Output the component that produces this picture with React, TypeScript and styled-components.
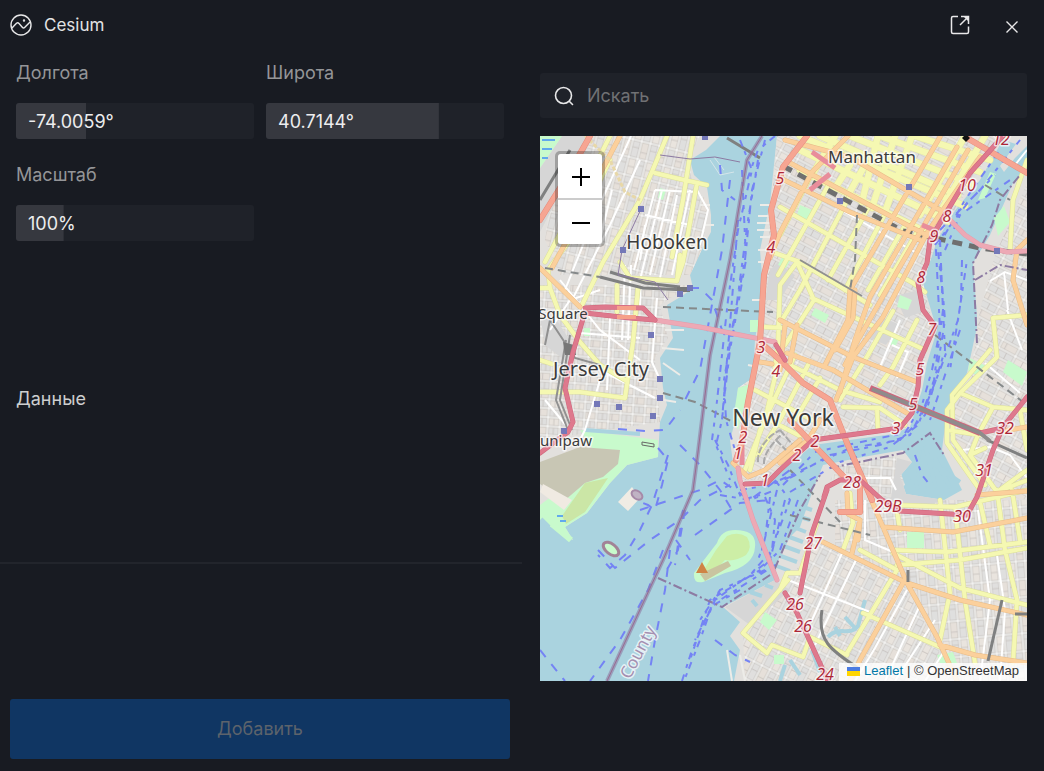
import React, { useId, useState } from "react";
import styled, { createGlobalStyle } from "styled-components";

const GlobalStyle = createGlobalStyle`
  *, *::before, *::after { box-sizing: border-box; }
  body {
    margin: 0;
    background: #181b22;
    color: #e3e3e4;
    font-family: Inter, "Liberation Sans", sans-serif;
    font-size: 18px;
    line-height: 24px;
  }
`;

const Page = styled.div`
  min-height: 100vh;
  display: flex;
  flex-direction: column;
`;

const Header = styled.header`
  display: flex;
  align-items: center;
  gap: 12px;
  height: 50px;
  padding: 0 16px 0 10px;
`;

const Title = styled.h1`
  flex: 1;
  margin: 0;
  font-size: 17px;
  font-weight: 400;
`;

const IconButton = styled.button`
  display: grid;
  place-items: center;
  width: 32px;
  height: 32px;
  padding: 0;
  border: 0;
  background: none;
  color: #e8e8e9;
`;

const HeaderActions = styled.div`
  display: flex;
  gap: 20px;
`;

const Columns = styled.main`
  flex: 1;
  display: grid;
  grid-template-columns: 1fr 1fr;
`;

const Settings = styled.section`
  display: flex;
  flex-direction: column;
`;

const Fields = styled.div`
  display: grid;
  grid-template-columns: 1fr 1fr;
  gap: 24px 12px;
  padding: 11px 18px 0 16px;
`;

const Field = styled.div`
  display: flex;
  flex-direction: column;
  gap: 18px;
`;

const Label = styled.label`
  color: #949598;
`;

const SliderBox = styled.div`
  position: relative;
  height: 36px;
`;

const Slider = styled.input`
  appearance: none;
  display: block;
  width: 100%;
  height: 36px;
  margin: 0;
  border-radius: 3px;
  background: linear-gradient(#36383f, #36383f) 0 0 / var(--fill) 100% no-repeat #1f2229;

  &::-webkit-slider-thumb {
    appearance: none;
    width: 1px;
    height: 36px;
  }
`;

const SliderValue = styled.output`
  position: absolute;
  top: 7px;
  left: 12px;
  color: #ededee;
  pointer-events: none;
`;

const DataSection = styled.section`
  height: 177px;
  margin-top: 146px;
  padding: 0 16px;
  border-bottom: 2px solid #22252c;
`;

const SectionTitle = styled.h2`
  margin: 0;
  color: #cdcecf;
  font-size: 18px;
  font-weight: 400;
`;

const AddButton = styled.button`
  height: 60px;
  margin: auto 12px 12px 10px;
  border: 0;
  border-radius: 3px;
  background: #103663;
  color: #5d636b;
  font: inherit;
`;

const MapColumn = styled.section`
  display: flex;
  flex-direction: column;
  gap: 18px;
  padding: 23px 17px 16px 18px;
`;

const SearchBox = styled.label`
  display: flex;
  align-items: center;
  gap: 13px;
  height: 45px;
  padding: 0 14px;
  border-radius: 3px;
  background: #1f2229;
  color: #e8e8e9;
`;

const SearchInput = styled.input`
  flex: 1;
  min-width: 0;
  padding: 0;
  border: 0;
  outline: 0;
  background: none;
  color: #e8e8e9;
  font: 18px/24px Inter, sans-serif;
  &::placeholder { color: #707174; }
`;

const MapFrame = styled.div`
  position: relative;
  height: 545px;
  overflow: hidden;
  background: #aad3df;
`;

const MapSvg = styled.svg`
  display: block;
  width: 100%;
  height: 100%;
`;

const ZoomControl = styled.div`
  position: absolute;
  top: 15px;
  left: 15px;
  width: 50px;
  padding: 3px;
  border-radius: 5px;
  background: rgba(0, 0, 0, 0.25);
`;

const ZoomButtons = styled.div`
  display: grid;
  gap: 2px;
  border-radius: 3px;
  overflow: hidden;
  background: #ccc;
`;

const ZoomButton = styled.button`
  display: grid;
  place-items: center;
  height: 44px;
  padding: 2px 0 0 2px;
  border: 0;
  background: #fff;
  color: #000;
`;

const Attribution = styled.div`
  position: absolute;
  right: 0;
  bottom: 0;
  display: flex;
  align-items: center;
  gap: 4px;
  height: 18px;
  padding: 0 8px 2px;
  background: rgba(255, 255, 255, 0.8);
  color: #333;
  font: 13px/16px "Liberation Sans", Arial, sans-serif;
  white-space: nowrap;
`;

const LeafletLink = styled.a`
  display: flex;
  align-items: center;
  gap: 4px;
  color: #0078a8;
  text-decoration: none;
`;

type RangeFieldProps = {
  label: string;
  min: number;
  max: number;
  step: number;
  initial: number;
  format: (value: number) => string;
};

function RangeField({ label, min, max, step, initial, format }: RangeFieldProps) {
  const id = useId();
  const [value, setValue] = useState(initial);
  const fill = `${((value - min) / (max - min)) * 100}%`;
  return (
    <Field>
      <Label htmlFor={id}>{label}</Label>
      <SliderBox>
        <Slider
          id={id}
          type="range"
          min={min}
          max={max}
          step={step}
          value={value}
          onChange={(e) => setValue(Number(e.target.value))}
          style={{ "--fill": fill } as React.CSSProperties}
        />
        <SliderValue htmlFor={id}>{format(value)}</SliderValue>
      </SliderBox>
    </Field>
  );
}

/* ---------- Map ---------- */

const LAND = [
  "M540 136H720L706 150 690 160 694 175 707 187 711 215 711 232 703 247 690 275 693 288 682 296 667 305 673 338 660 358 663 388 667 405 660 422 658 457 627 465 610 483 587 513 565 527 573 540 540 520Z",
  "M777 136H1005L980 180 953 213 937 240 923 283 933 317 937 330 927 363 922 390 910 427 893 434 813 445 780 472 763 485 743 489 733 463 730 440 735 422 738 388 753 378 755 340 763 288 760 250 770 203Z",
  "M1027 170 1013 183 990 235 973 263 977 317 977 327 967 373 947 410 942 450 962 490 944 500 906 494 900 476 912 462 903 450 863 457 823 465 813 490 800 527 790 537 777 563 775 580 723 607 740 622 730 636 740 650 734 681H1027Z",
  "M990 136 1027 136 1027 146 1015 158 1004 172 1000 166 1016 144Z",
];

type Hatch = { id: string; angle: number; w: number; h: number };
const HATCHES: Hatch[] = [
  { id: "blocksWest", angle: 14, w: 9, h: 18 },
  { id: "blocksCity", angle: 4, w: 12, h: 9 },
  { id: "blocksIsland", angle: 28, w: 19, h: 9 },
  { id: "blocksSouth", angle: 27, w: 9, h: 19 },
  { id: "blocksEast", angle: -5, w: 9, h: 18 },
];

const DISTRICTS: [string, string][] = [
  ["blocksWest", "M560 136H700L688 160 694 190 708 200 703 247 690 275H560L545 240Z"],
  ["blocksCity", "M540 285H690L660 305 668 338 655 358 660 422 540 440Z"],
  ["blocksIsland", "M777 136H1000L937 240 923 283 933 325 918 390 905 425 813 438 765 480 743 480 738 388 753 378 760 345Z"],
  ["blocksSouth", "M812 535 903 583 940 645 953 681H745L743 634 790 585Z"],
  ["blocksEast", "M835 500 1027 500V681H953L907 583 835 550Z"],
  ["blocksIsland", "M1027 183 995 255 980 310 970 380 950 415 950 450 980 490 1027 500Z"],
  ["blocksCity", "M840 465 895 456 905 485 880 500 860 475 830 480Z"],
];

const PARKS = [
  "M540 136H562L540 168Z",
  "M658 440 658 457 627 465 610 483 587 513 565 527 573 540 540 520V505L560 490 600 460 580 430Z",
  "M717 543Q721 530 735 530Q757 530 755 547Q754 566 725 573L703 582Q693 584 694 573Z",
  "M907 532H924V548H907Z",
  "M738 388 750 384 738 430 733 420Z",
  "M900 295 912 300 908 310 897 307Z",
  "M800 205 812 210 808 220 797 215Z",
  "M782 257 790 261 786 268 778 265Z",
  "M815 308 829 315 825 323 811 315Z",
  "M1008 360 1027 372 1022 386 1003 372Z",
  "M970 358 986 366 979 376 968 371Z",
  "M994 218 1004 206 1010 222 998 236Z",
  "M765 612 777 620 769 630 760 622Z",
  "M584 328H590V336H584ZM660 188 666 190 663 200 658 198Z",
  "M893 336 899 339 895 347 890 344ZM774 655H784V664H774Z",
  "M978 200 990 172 996 174 985 198Z",
  "M750 320H761V332H750ZM610 452H616V456H610ZM937 655 953 652 957 663 940 663Z",
];

const GREYS = [
  "M540 168 562 136H590L540 232Z",
  "M540 315 558 322 576 350 572 366 545 345Z",
  "M880 316 900 325 886 345 870 338Z",
  "M895 296 918 290 922 312 905 318Z",
  "M897 458 912 462 900 476 906 494 944 500 925 506 890 505Z",
  "M725 607 775 580 790 590 750 625Z",
  "M880 497 935 500 935 506 890 506Z",
  "M770 270 778 262 795 275 780 300 765 300Z",
];

const YELLOW = [
  "M667 136 640 200 603 262 582 305", "M693 136 683 200 672 257", "M655 173 680 179 707 185",
  "M697 183 683 262 677 280", "M620 262 630 278 677 281 680 255", "M617 285V312", "M638 288 633 342 625 398",
  "M540 288H550L560 315 580 342 600 365 625 380", "M540 392 580 392 625 398", "M550 288 548 270 570 240 610 160",
  "M610 136 570 215 545 262", "M540 360 552 364",
  "M780 207 913 283 925 292", "M772 252 800 262 870 305", "M812 298 860 320 925 350", "M765 327 785 328",
  "M850 195 800 290 782 320", "M829 184 778 275", "M813 172 780 235", "M870 205 828 280", "M885 214 845 290", "M905 225 868 290", "M917 232 880 295",
  "M893 311 868 355 840 400", "M917 320 893 367 880 385", "M797 262 814 300 785 345", "M797 262 780 285 778 345",
  "M780 355 765 420 745 470", "M778 345 775 368", "M843 407 880 408 905 425", "M877 408 878 430",
  "M795 355 760 430 750 470", "M808 365 780 420 758 455", "M820 378 795 420", "M790 365 840 390 880 402", "M755 390 812 420", "M760 415 800 436",
  "M1027 315 993 318 997 357 960 393 947 410 947 443 980 490", "M990 350 952 395 953 440 985 485",
  "M960 393 993 407 1027 410", "M993 407 978 435 970 455 997 492", "M947 430 980 435", "M1027 470 997 492 1027 480", "M1020 410 1027 450", "M970 455 985 448",
  "M1027 160 1013 200 1010 250", "M893 550 947 552 1027 542", "M897 565 960 560 1027 548",
  "M860 550 897 570 847 653", "M893 553 960 588 1027 605", "M940 500 950 593 940 640", "M955 507 965 600 975 663", "M997 490 1005 550 1017 600 1013 663",
  "M863 613 940 647", "M980 502 990 545", "M896 505 955 507 1027 490", "M788 580 743 633 767 653 772 645 803 657 810 637 847 655",
  "M780 590 787 573 800 573 817 523", "M850 493 853 523 843 550", "M896 505 900 530", "M1012 490 1020 540",
];

const MIDTOWN = [
  "M800 136 965 206", "M820 136 958 195", "M850 136 972 184", "M880 136 980 172", "M915 136 990 160", "M800 150 950 222", "M800 170 930 234",
  "M835 136 812 175", "M850 165 835 188", "M865 165 848 195", "M878 136 862 202", "M895 136 872 208", "M912 136 885 212", "M965 136 920 215", "M985 136 940 212",
];

const ORANGE = [
  "M540 268 580 307", "M620 136 602 170 575 225 552 268", "M785 140 850 157 940 210", "M848 136 812 172 780 233 770 258",
  "M790 163 860 200 930 237", "M780 178 850 212 920 240", "M940 137 850 290 848 320 825 365", "M957 147 870 297 855 340 840 392", "M980 157 927 233 883 317 853 357 836 400",
  "M968 150 898 270 858 340 845 365", "M855 290 853 318 835 350", "M780 320 853 357 917 382", "M787 353 833 370 867 390 907 413",
  "M785 325 780 370", "M797 325 790 362", "M780 463 808 440 820 420", "M733 463 748 477 765 470 800 440", "M760 362 772 364",
  "M823 542 907 583 960 600 1027 615", "M903 583 860 660 850 681", "M870 497 883 527 907 583 937 637 957 681", "M883 527 953 532 1027 518",
  "M940 645 975 655 1027 663", "M847 493 848 514 860 520 852 553", "M860 520 858 540", "M977 495 1027 491", "M1003 431 1027 427",
  "M1027 240 1017 250 1013 280 1027 325",
];

const TRUNK = [
  "M590 136 565 180 540 220", "M807 136 783 167 771 210 774 235 764 275 760 342 748 402 742 442 736 460",
  "M967 138 1027 173", "M790 420 847 480", "M760 342 780 360 803 383 830 400 847 443 872 500", "M860 488V512L840 512",
];

const MOTORWAY = [
  "M540 453 568 432 573 422 565 388 573 352 585 312", "M585 308 605 307 643 308 655 320", "M585 313 630 318 655 320",
  "M1003 136 970 173 940 223 930 240 927 263 918 283 923 310 935 326 920 360 918 387 912 413 900 428 813 440 780 470 767 483 745 484",
  "M785 593 797 613 828 681", "M827 490 812 533 800 593", "M824 497 827 487 840 480 860 480 882 500 900 511 967 515 977 497 993 450 1003 427 1027 397",
  "M980 433 1003 428", "M776 345 785 360",
];

const TUNNEL = ["M655 320 700 327 775 342", "M738 468 740 480 753 520 777 580", "M950 220 965 235 980 245 1007 252 1027 251"];

const WHITE_STREETS = [
  "M631 136 595 215 565 290", "M640 160 610 225 572 300", "M625 265 622 340", "M631 265 628 340", "M612 190 600 240", "M657 298 652 362 660 380", "M580 333 640 338", "M600 370 655 398", "M545 400 570 430",
  "M662 190 640 280", "M655 190 634 270", "M670 190 650 275", "M677 195 660 278", "M690 190 672 275", "M655 190 694 192", "M645 215 690 225",
  "M600 380 585 430 580 440", "M560 280 600 330 640 360", "M645 225 640 260", "M697 190 708 210 700 245", "M815 195 915 252",
  "M880 367 900 320", "M892 345 908 352 897 378", "M842 553 812 620", "M856 560 815 645", "M783 578 870 612", "M865 500 865 540 893 552",
  "M907 590 875 648 855 681", "M920 605 885 681", "M935 620 895 681", "M945 650 925 681", "M978 510 990 600 980 681", "M997 555 1005 610 1000 681",
  "M985 363 1020 393", "M1007 310 1022 350", "M990 281 1005 272 1027 280", "M1004 272 1008 310", "M962 450 990 447 1010 455 1027 478", "M865 478 890 478 896 490", "M1015 165 1027 150", "M640 290 640 310", "M610 318 607 390", "M550 330 570 300 600 290",
];

const HARBOUR_FERRIES = [
  "M618 429 645 431 665 430 680 410", "M658 448 668 460 662 485 655 510 648 505 635 500", "M668 455 652 505 640 530 625 555 610 568 598 555", "M598 550 615 568 650 540 680 520 700 500 730 485",
  "M640 510 700 490 720 480 750 500 790 470", "M695 535 740 503 770 500", "M663 550 648 590 620 640 590 681", "M540 650 565 681",
  "M670 550 665 590 655 640 648 681", "M685 510 678 550 664 575", "M683 510 675 565", "M676 540 690 560", "M680 445 700 465 720 490 735 515",
  "M715 640 735 655 750 662", "M690 288 700 288 712 300 722 330", "M720 165 722 190 735 200", "M730 180 722 250 700 370 685 400",
];

const BUSY_FERRIES = [
  "M740 140 752 170 738 230 728 300 716 410 712 440", "M765 140 752 190 745 260 730 340 722 420 716 445 730 480", "M758 160 748 220 736 310 724 380 726 420 738 460",
  "M738 220 732 300 722 420", "M742 170 746 260 730 350 724 400", "M775 136 758 150 747 180",
  "M740 590 712 606 700 640 684 681", "M720 590 703 625 692 650 682 681", "M798 500 780 550 760 570 710 600 690 660", "M785 500 770 560 715 600 695 640",
  "M777 490 762 550 775 565 720 600", "M770 497 765 540 758 560", "M765 497 775 520 772 550 750 575", "M765 570 720 590 700 620", "M775 480 790 500 775 540 768 560",
  "M715 440 728 465 742 500 760 495", "M790 478 830 455 880 445 910 435 928 400 937 370 945 320 940 260", "M783 485 815 452 870 440 905 433 922 405 932 370 940 330 936 250 965 200 1000 150",
  "M790 492 840 462 890 447 918 425 940 370 958 320 967 260", "M780 480 850 448 900 440 925 415 945 350 942 290 938 250", "M935 245 970 200 995 175", "M945 250 960 215 1010 180",
  "M915 455 922 475 930 485", "M740 490 770 485 795 475", "M720 495 750 500 775 490", "M940 240 943 310 934 380 920 420", "M962 260 961 300 950 370", "M960 330 930 420", "M940 230 980 190 1020 140",
];

const RAILS = [
  "M600 277 643 288 687 290", "M610 272 645 283 680 287", "M540 200 570 150", "M727 138 760 158", "M987 440 1027 458", "M822 610C817 640 830 650 858 668",
  "M1002 600 988 661", "M908 570V582", "M1015 614H1027",
];
const THIN_RAILS = ["M550 320 575 358 600 365", "M545 345 550 320", "M570 335 560 400 572 430", "M566 340 556 400 568 430", "M800 260 862 296"];
const DASHED_RAILS = ["M663 307 773 312", "M663 393 695 402 733 422", "M545 268 600 277", "M857 215 855 260 850 290", "M935 335 1027 405", "M790 515 870 535", "M790 470 840 522", "M985 185 1010 200"];
const BORDERS = ["M658 578 722 607 773 573 790 533 800 510 820 475", "M830 468 903 453 930 433 944 455", "M977 343 973 263 992 225 1000 200 1020 175", "M975 280 1000 265 1027 270"];

const STATIONS: [number, number][] = [
  [680, 294], [690, 288], [651, 335], [660, 379], [660, 398], [653, 416], [619, 407], [597, 404], [564, 431],
  [641, 209], [623, 250], [705, 137], [909, 187], [840, 201], [997, 251],
];

const PIERS = [
  "M700 205H710M705 225H714M662 348 684 350M663 363 680 375M665 330H684M752 300H764M748 365 758 367",
  "M758 216H770M757 223H770M757 230H772M760 237H772M760 205H770M758 250H770M758 262H766M727 650 732 681M740 655 745 681M664 400 676 402",
];
const SLIPS = [
  "M781 545 800 552M778 555 797 562M784 535 803 542M788 525 806 532M794 515 810 520M797 505 812 510M774 565 790 571",
  "M925 446 936 488M918 455 925 492M912 466 918 490M935 458 950 488M928 460 960 482M930 455 905 480M920 450 912 480",
  "M750 592 762 596M765 585 773 588M752 600 757 606",
];

const EXITS: [string, number, number][] = [
  ["12", 1001, 139], ["5", 780, 178], ["4", 771, 247], ["3", 761, 347], ["4", 776, 371], ["10", 967, 185], ["8", 947, 216],
  ["9", 934, 236], ["8", 921, 277], ["7", 932, 329], ["5", 920, 369], ["5", 913, 404], ["3", 896, 428], ["2", 815, 441],
  ["2", 797, 455], ["1", 765, 480], ["2", 743, 437], ["1", 738, 453], ["32", 1005, 428], ["31", 984, 470], ["28", 852, 482],
  ["29B", 888, 506], ["30", 962, 516], ["27", 813, 543], ["26", 795, 604], ["26", 803, 626], ["24", 825, 674],
];

const PLACES: [string, number, number, number][] = [
  ["Manhattan", 872, 163, 17], ["Hoboken", 667, 249, 19], ["Jersey City", 601, 376, 20],
  ["New York", 783, 426, 23], ["Square", 563, 319, 15], ["unipaw", 566, 446, 15],
];

const PlaceName = styled.text`
  font-family: "Noto Sans", sans-serif;
  fill: #3b3b3b;
  stroke: rgba(255, 255, 255, 0.7);
  stroke-width: 3px;
  stroke-linejoin: round;
  paint-order: stroke;
  text-anchor: middle;
`;

const ExitNumber = styled(PlaceName)`
  fill: #ad2637;
  font-family: "Open Sans", "Noto Sans", sans-serif;
  font-size: 16px;
  font-style: italic;
  font-weight: 400;
`;

const CountyName = styled(PlaceName)`
  fill: #a58fb0;
  font-size: 17px;
`;

type RoadsProps = { paths: string[]; color: string; edge: string; width: number };

function Roads({ paths, color, edge, width }: RoadsProps) {
  const d = paths.join("");
  return (
    <g fill="none" strokeLinejoin="round" strokeLinecap="round">
      <path d={d} stroke={edge} strokeWidth={width + 1} />
      <path d={d} stroke={color} strokeWidth={width} />
    </g>
  );
}

const STATE_LINE = "M762 136 747 160 730 260 710 355 698 452 693 490 663 560 607 681";

function CityMap() {
  return (
    <MapSvg viewBox="540 136 487 545" preserveAspectRatio="xMidYMid slice" role="img" aria-label="New York">
      <defs>
        {HATCHES.map(({ id, angle, w, h }) => (
          <pattern key={id} id={id} width={w * 2} height={h * 2} patternUnits="userSpaceOnUse" patternTransform={`rotate(${angle})`}>
            <rect width={w * 2} height={h * 2} fill="#fbfbfa" />
            <g stroke="#c6c2be" strokeWidth="0.8">
              <rect x="1" y="1" width={w - 2} height={h - 2} fill="#e9e4de" />
              <rect x={w + 1} y="1" width={w - 2} height={h - 2} fill="#dfdfde" />
              <rect x="1" y={h + 1} width={w - 2} height={h - 2} fill="#e0dfde" />
              <rect x={w + 1} y={h + 1} width={w - 2} height={h - 2} fill="#e6e0da" />
              {w > h
                ? <path d={`M${w / 2} 1V${h - 1}M${w * 1.5} 1V${h - 1}M${w / 2} ${h + 1}V${h * 2 - 1}M${w * 1.3} ${h + 1}V${h * 2 - 1}`} />
                : <path d={`M1 ${h / 2}H${w - 1}M1 ${h * 1.4}H${w - 1}M${w + 1} ${h / 3}H${w * 2 - 1}M${w + 1} ${h * 1.6}H${w * 2 - 1}`} />}
            </g>
          </pattern>
        ))}
      </defs>
      <rect x="540" y="136" width="487" height="545" fill="#aad3df" />
      <path d={LAND.join("")} fill="#e2e0dd" />
      {DISTRICTS.map(([id, d]) => <path key={d} d={d} fill={`url(#${id})`} />)}
      <path d={GREYS.join("")} fill="#d6d6d6" />
      <path d={PARKS.join("")} fill="#c8facc" />
      <path d="M540 462 580 447 620 450 618 464 603 477 585 483 564 501 540 484Z" fill="#c8c6b4" />
      <path d="M540 492 543 484 572 500 564 510Z" fill="#f0eae2" />
      <path d="M562 516 585 483 608 478 600 490 585 512 566 524Z" fill="#cbe6a6" />
      <path d="M540 514 571 540" stroke="#c8facc" strokeWidth="6" />
      <path d="M727 536Q738 531 747 537Q753 547 746 555Q735 562 725 560L712 573 702 573 716 550Z" fill="#cdeea6" />
      <path d="M700 574 728 561 731 566 705 581Z" fill="#c9c4a0" />
      <path d="M618 502 632 487 640 498 628 511Z" fill="#f0ece4" />
      <ellipse cx="637" cy="495" rx="6" ry="4" fill="#c0b3c4" stroke="#a68aa8" strokeWidth="2" transform="rotate(35 637 495)" />
      <ellipse cx="611" cy="549" rx="9" ry="5" fill="#c8facc" stroke="#a28397" strokeWidth="3" transform="rotate(38 611 549)" />
      <path d="M585 430 640 434M541 519 549 527" stroke="#aad3df" strokeWidth="4" />
      <path d="M542 140H555M542 149H552M542 158H548M557 516H563M560 521H566" stroke="#62a9ed" strokeWidth="2" />
      <path d="M828 637C838 625 850 637 858 626L865 600M840 636 835 627M855 628 845 617M800 675 790 660M820 672 812 650M785 665 780 681" fill="none" stroke="#aad3df" strokeWidth="4" />
      <path d={SLIPS.join("")} fill="none" stroke="#aad3df" strokeWidth="4" />
      <path d={PIERS.join("")} stroke="#edece8" strokeWidth="2" />
      <path d="M710 160 720 175 734 172M714 157 724 170" fill="none" stroke="#d5e6ea" strokeWidth="1" />
      <path d={WHITE_STREETS.join("")} fill="none" stroke="#fff" strokeWidth="2" />
      <Roads paths={MIDTOWN} color="#f5f8b2" edge="#e6e9a6" width={6} />
      <Roads paths={YELLOW} color="#f5f8b2" edge="#dcdf9b" width={4} />
      <path d="M783 166 903 231 980 248 1027 254" fill="none" stroke="#6f6f6f" strokeWidth="5" strokeDasharray="10 7" />
      <Roads paths={ORANGE} color="#fbd09c" edge="#e8bb88" width={4} />
      <path d="M585 136 610 160 625 192 640 200" fill="none" stroke="#e8d8a8" strokeWidth="3" strokeDasharray="4 2" />
      <path d={DASHED_RAILS.join("")} fill="none" stroke="#85898a" strokeWidth="2" strokeDasharray="8 5" />
      <path d={RAILS.join("")} fill="none" stroke="#7f8080" strokeWidth="3" />
      <path d={THIN_RAILS.join("")} fill="none" stroke="#909090" strokeWidth="2" />
      <path d="M677 287H690V292H677ZM563 342 574 345 576 355 565 355Z" fill="#777" />
      <g fill="none" stroke="#7483f4" strokeWidth="2">
        <path d={HARBOUR_FERRIES.join("")} strokeDasharray="9 9" />
        <path d={BUSY_FERRIES.join("")} strokeDasharray="7 5 4 7" />
      </g>
      <g fill="none" stroke="#8d7ba3">
        <path d={STATE_LINE} strokeWidth="4" opacity="0.6" />
        <path d={STATE_LINE} stroke="#9a6b91" strokeWidth="1" />
        <path d={BORDERS.join("")} strokeWidth="2" strokeDasharray="9 3 2 3" />
        <path d="M660 155 690 159 715 157 740 162M641 209 622 250 618 275 655 282 668 300" strokeWidth="1" />
      </g>
      <Roads paths={TUNNEL} color="#eda9b5" edge="#e39cab" width={4} />
      <path d="M812 152 835 168M810 190 830 174M922 225 934 230M742 465V445" fill="none" stroke="#e88d9b" strokeWidth="5" />
      <Roads paths={TRUNK} color="#f6a592" edge="#e58b7b" width={5} />
      <Roads paths={MOTORWAY} color="#de798d" edge="#cf667c" width={4} />
      <path d="M617 308H636M617 317H636" stroke="#f6a08a" strokeWidth="4" />
      <path d="M870 388 980 433" stroke="#cf667c" strokeWidth="6" />
      <path d="M872 389 980 433 990 441" fill="none" stroke="#8f8c8c" strokeWidth="4" />
      <path d="M758 462Q757 448 772 435L780 430M764 464Q763 452 782 434M780 430 792 444M776 440 786 450" fill="none" stroke="#a9a9a9" strokeWidth="2" strokeDasharray="7 2" />
      {STATIONS.map(([x, y]) => <rect key={`${x}-${y}`} x={x - 3} y={y - 3} width="6" height="6" fill="#7478b8" />)}
      <path d="M966 134 970 138 966 142 962 138Z" fill="#111" />
      <path d="M702 562 708 573H696Z" fill="#cf8345" />
      <path d="M642 442 654 444V447L642 445Z" fill="none" stroke="#666" />
      {EXITS.map(([n, x, y]) => <ExitNumber key={`${x}-${y}`} x={x} y={y + 6}>{n}</ExitNumber>)}
      {PLACES.map(([name, x, y, size]) => <PlaceName key={name} x={x} y={y} fontSize={size}>{name}</PlaceName>)}
      <CountyName transform="translate(643 655) rotate(-62)">County</CountyName>
    </MapSvg>
  );
}

export default function App() {
  const degrees = (v: number) => `${v.toFixed(4)}°`;
  return (
    <>
      <GlobalStyle />
      <Page>
        <Header>
          <svg width="22" height="22" viewBox="0 0 22 22" fill="none" stroke="#e8e8e9" strokeWidth="1.4" strokeLinecap="round" strokeLinejoin="round" aria-hidden="true">
            <circle cx="11" cy="11" r="10" />
            <path d="M2 14 6.5 9.3Q7.8 8.2 9 9.5L12.5 13.5Q13.5 14.6 14.6 13.5L19.8 8.3" />
            <circle cx="14" cy="6.5" r="0.5" fill="#e8e8e9" />
          </svg>
          <Title>Cesium</Title>
          <HeaderActions>
            <IconButton aria-label="Открыть в новом окне">
              <svg width="20" height="20" viewBox="0 0 20 20" fill="none" stroke="currentColor" strokeWidth="1.5">
                <path d="M8 1.5H3Q1.5 1.5 1.5 3V17Q1.5 18.5 3 18.5H17Q18.5 18.5 18.5 17V11.5M10 10 18 2M11 1.5H18.5V9" />
                <path d="M13.5 1.5H18.5V6.5Z" fill="currentColor" stroke="none" />
              </svg>
            </IconButton>
            <IconButton aria-label="Закрыть">
              <svg width="14" height="18" viewBox="0 0 14 18" fill="none" stroke="currentColor" strokeWidth="1.4">
                <path d="M1.5 5.5 12.5 16.5M12.5 5.5 1.5 16.5" />
              </svg>
            </IconButton>
          </HeaderActions>
        </Header>
        <Columns>
          <Settings>
            <Fields>
              <RangeField label="Долгота" min={-180} max={180} step={0.0001} initial={-74.0059} format={degrees} />
              <RangeField label="Широта" min={-90} max={90} step={0.0001} initial={40.7144} format={degrees} />
              <RangeField label="Масштаб" min={0} max={500} step={1} initial={100} format={(v) => `${v}%`} />
            </Fields>
            <DataSection>
              <SectionTitle>Данные</SectionTitle>
            </DataSection>
            <AddButton type="button" disabled>Добавить</AddButton>
          </Settings>
          <MapColumn>
            <SearchBox>
              <svg width="20" height="20" viewBox="0 0 20 20" fill="none" stroke="currentColor" strokeWidth="1.6" strokeLinecap="round" aria-hidden="true">
                <circle cx="9.5" cy="9.5" r="8" />
                <path d="M15.5 15.5 18.5 18.5" />
              </svg>
              <SearchInput type="search" placeholder="Искать" aria-label="Искать" />
            </SearchBox>
            <MapFrame>
              <CityMap />
              <ZoomControl>
                <ZoomButtons>
                  <ZoomButton aria-label="Приблизить">
                    <svg width="18" height="18" stroke="currentColor" strokeWidth="2"><path d="M0 9H18M9 0V18" /></svg>
                  </ZoomButton>
                  <ZoomButton aria-label="Отдалить">
                    <svg width="18" height="18" stroke="currentColor" strokeWidth="2"><path d="M0 9H18" /></svg>
                  </ZoomButton>
                </ZoomButtons>
              </ZoomControl>
              <Attribution>
                <LeafletLink href="https://leafletjs.com">
                  <svg width="13" height="9" aria-hidden="true">
                    <path fill="#4c7be1" d="M0 0H13V4H0Z" />
                    <path fill="#ffd500" d="M0 4H13V9H0Z" />
                  </svg>
                  Leaflet
                </LeafletLink>
                <span>| © OpenStreetMap</span>
              </Attribution>
            </MapFrame>
          </MapColumn>
        </Columns>
      </Page>
    </>
  );
}
